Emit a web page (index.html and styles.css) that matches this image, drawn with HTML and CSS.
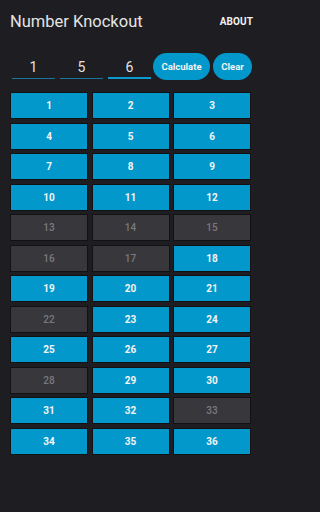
FILE: index.html
```html
<!DOCTYPE html>
<html>
<head>
<meta charset="utf-8">
<link rel="stylesheet" href="styles.css">
</head>
<body>
<div class="app">
  <header class="bar">
    <span class="title">Number Knockout</span>
    <span class="about">ABOUT</span>
  </header>
  <div class="controls">
    <div class="field"><span>1</span></div>
    <div class="field"><span>5</span></div>
    <div class="field focus"><span>6</span></div>
    <button class="pill calc">Calculate</button>
    <button class="pill clear">Clear</button>
  </div>
  <div class="grid">
    <div class="cell">1</div><div class="cell">2</div><div class="cell">3</div>
    <div class="cell">4</div><div class="cell">5</div><div class="cell">6</div>
    <div class="cell">7</div><div class="cell">8</div><div class="cell">9</div>
    <div class="cell">10</div><div class="cell">11</div><div class="cell">12</div>
    <div class="cell off">13</div><div class="cell off">14</div><div class="cell off">15</div>
    <div class="cell off">16</div><div class="cell off">17</div><div class="cell">18</div>
    <div class="cell">19</div><div class="cell">20</div><div class="cell">21</div>
    <div class="cell off">22</div><div class="cell">23</div><div class="cell">24</div>
    <div class="cell">25</div><div class="cell">26</div><div class="cell">27</div>
    <div class="cell off">28</div><div class="cell">29</div><div class="cell">30</div>
    <div class="cell">31</div><div class="cell">32</div><div class="cell off">33</div>
    <div class="cell">34</div><div class="cell">35</div><div class="cell">36</div>
  </div>
</div>
</body>
</html>
```
FILE: styles.css
```css
html, body {
  margin: 0;
  padding: 0;
  background: #1e1d22;
  font-family: Roboto, "Liberation Sans", sans-serif;
}
.app {
  width: 261px;
  height: 512px;
  background: #1e1d22;
}
.bar {
  display: flex;
  align-items: center;
  justify-content: space-between;
  height: 42px;
  padding: 0 8px 0 10px;
}
.title {
  font-size: 16.5px;
  color: #e4e4e4;
}
.about {
  font-size: 10px;
  font-weight: 700;
  color: #f2f2f2;
  letter-spacing: 0.1px;
}
.controls {
  display: flex;
  align-items: center;
  height: 27px;
  margin-top: 11px;
  padding-left: 12px;
}
.field {
  width: 43px;
  height: 24px;
  margin-right: 5px;
  border-bottom: 1.5px solid #1b7799;
  display: flex;
  align-items: center;
  justify-content: center;
  color: #e2e2e2;
  font-size: 14px;
  box-sizing: border-box;
  padding-top: 2px;
}
.field.focus {
  border-bottom: 2px solid #0a9ad0;
  margin-right: 2px;
}
.pill {
  border: none;
  background: #0398cc;
  color: #f4f4f4;
  font-family: Roboto, "Liberation Sans", sans-serif;
  font-weight: 700;
  font-size: 9.5px;
  height: 27px;
  border-radius: 14px;
  padding: 0;
}
.calc {
  width: 57px;
  margin-right: 3px;
}
.clear {
  width: 39px;
}
.grid {
  display: grid;
  grid-template-columns: repeat(3, 78px);
  grid-auto-rows: 27px;
  column-gap: 3.5px;
  row-gap: 3.5px;
  margin: 12px 0 0 10px;
}
.cell {
  background: #0398cc;
  border: 1px solid #121215;
  box-sizing: border-box;
  color: #f4f4f4;
  font-size: 10px;
  font-weight: 700;
  display: flex;
  align-items: center;
  justify-content: center;
}
.cell.off {
  background: #38373c;
  color: #7a797e;
  font-weight: 500;
}
```
